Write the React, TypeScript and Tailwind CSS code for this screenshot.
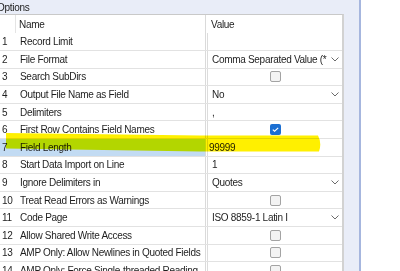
import React from "react";

type Row = {
  name: string;
  kind: "text" | "select" | "check";
  value?: string;
  checked?: boolean;
  selected?: boolean;
};

const rows: Row[] = [
  { name: "Record Limit", kind: "text", value: "" },
  { name: "File Format", kind: "select", value: "Comma Separated Value (*.csv)" },
  { name: "Search SubDirs", kind: "check" },
  { name: "Output File Name as Field", kind: "select", value: "No" },
  { name: "Delimiters", kind: "text", value: "," },
  { name: "First Row Contains Field Names", kind: "check", checked: true },
  { name: "Field Length", kind: "text", value: "99999", selected: true },
  { name: "Start Data Import on Line", kind: "text", value: "1" },
  { name: "Ignore Delimiters in", kind: "select", value: "Quotes" },
  { name: "Treat Read Errors as Warnings", kind: "check" },
  { name: "Code Page", kind: "select", value: "ISO 8859-1 Latin I" },
  { name: "Allow Shared Write Access", kind: "check" },
  { name: "AMP Only: Allow Newlines in Quoted Fields", kind: "check" },
  { name: "AMP Only: Force Single-threaded Reading", kind: "check" },
];

function Chevron() {
  return (
    <svg width="8" height="5" viewBox="0 0 8 5" className="shrink-0">
      <polyline points="0.5,0.5 4,4 7.5,0.5" fill="none" stroke="#6b6b6b" strokeWidth="1" />
    </svg>
  );
}

function Checkbox({ checked }: { checked?: boolean }) {
  if (checked) {
    return (
      <span className="w-[11px] h-[11px] rounded-[2px] bg-[#1b6fd2] flex items-center justify-center">
        <svg width="7" height="5" viewBox="0 0 7 5">
          <polyline points="0.8,2.6 2.6,4.2 6.2,0.8" fill="none" stroke="#fff" strokeWidth="1.1" />
        </svg>
      </span>
    );
  }
  return <span className="w-[11px] h-[11px] rounded-[2px] border border-[#a3a3a3] bg-[#f3f3f3]" />;
}

function ValueCell({ row }: { row: Row }) {
  if (row.kind === "check") {
    return (
      <div className="flex-1 flex items-center justify-center">
        <Checkbox checked={row.checked} />
      </div>
    );
  }
  if (row.kind === "select") {
    return (
      <div className="flex-1 min-w-0 flex items-center pl-[4px] pr-[3px] gap-[4px]">
        <span className="flex-1 min-w-0 whitespace-nowrap overflow-hidden">{row.value}</span>
        <Chevron />
      </div>
    );
  }
  return (
    <div className={`flex-1 flex items-center ${row.selected ? "pl-[1px]" : "pl-[4px]"}`}>
      {row.value}
    </div>
  );
}

export default function App() {
  return (
    <div className="relative w-[400px] h-[271px] overflow-hidden flex bg-white text-[10px] tracking-[-0.3px] text-[#1e1e1e] font-['Liberation_Sans',Arial,sans-serif]">
      {/* options panel */}
      <div className="w-[359px] shrink-0 bg-[#e9edf8] flex flex-col">
        <div className="h-[14px] flex items-center -ml-[3px] text-[#222]">Options</div>
        <div className="w-[344px] bg-white border-t border-[#c9c9c9] border-r-2 border-r-[#d2d2d2]">
          {/* header */}
          <div className="h-[18.4px] flex">
            <div className="w-[16px] border-r border-[#e4e4e4]" />
            <div className="w-[190px] pl-[3px] flex items-center border-r border-[#dadada]">Name</div>
            <div className="flex-1 pl-[5px] flex items-center">Value</div>
          </div>
          {rows.map((row, i) => (
            <div key={row.name} className="h-[17.6px] flex border-b border-[#e2e2e2]">
              <div
                className={`w-[206px] shrink-0 flex items-center border-r border-[#dadada] ${
                  row.selected ? "bg-[#c2dbf3]" : ""
                }`}
              >
                <span className="w-[20px] pl-[2px]">{i + 1}</span>
                <span className="whitespace-nowrap">{row.name}</span>
              </div>
              <div className="flex-1 min-w-0 flex ml-px border-l border-[#dcdcdc]">
                <ValueCell row={row} />
              </div>
            </div>
          ))}
        </div>
      </div>
      <div className="w-[2px] shrink-0 bg-[#a6b6de]" />
      <div className="flex-1 bg-white" />

      {/* yellow highlighter stroke drawn over the screenshot */}
      <svg
        width="400"
        height="271"
        className="absolute left-0 top-0 pointer-events-none mix-blend-multiply"
      >
        <defs>
          <clipPath id="sel">
            <rect x="0" y="139" width="206" height="17.6" />
          </clipPath>
          <clipPath id="nosel">
            <path d="M0 0 H400 V271 H0 Z M0 139 V156.6 H206 V139 Z" clipRule="evenodd" />
          </clipPath>
        </defs>
        <path
          d="M6 133 L200 135.5 L318 135.5 Q322 143 319 151.5 L200 151.5 L6 148.5 Z"
          fill="#fff000"
          clipPath="url(#nosel)"
        />
        <path
          d="M6 133 L200 135.5 L318 135.5 Q322 143 319 151.5 L200 151.5 L6 148.5 Z"
          fill="#ecf900"
          clipPath="url(#sel)"
        />
      </svg>
    </div>
  );
}
